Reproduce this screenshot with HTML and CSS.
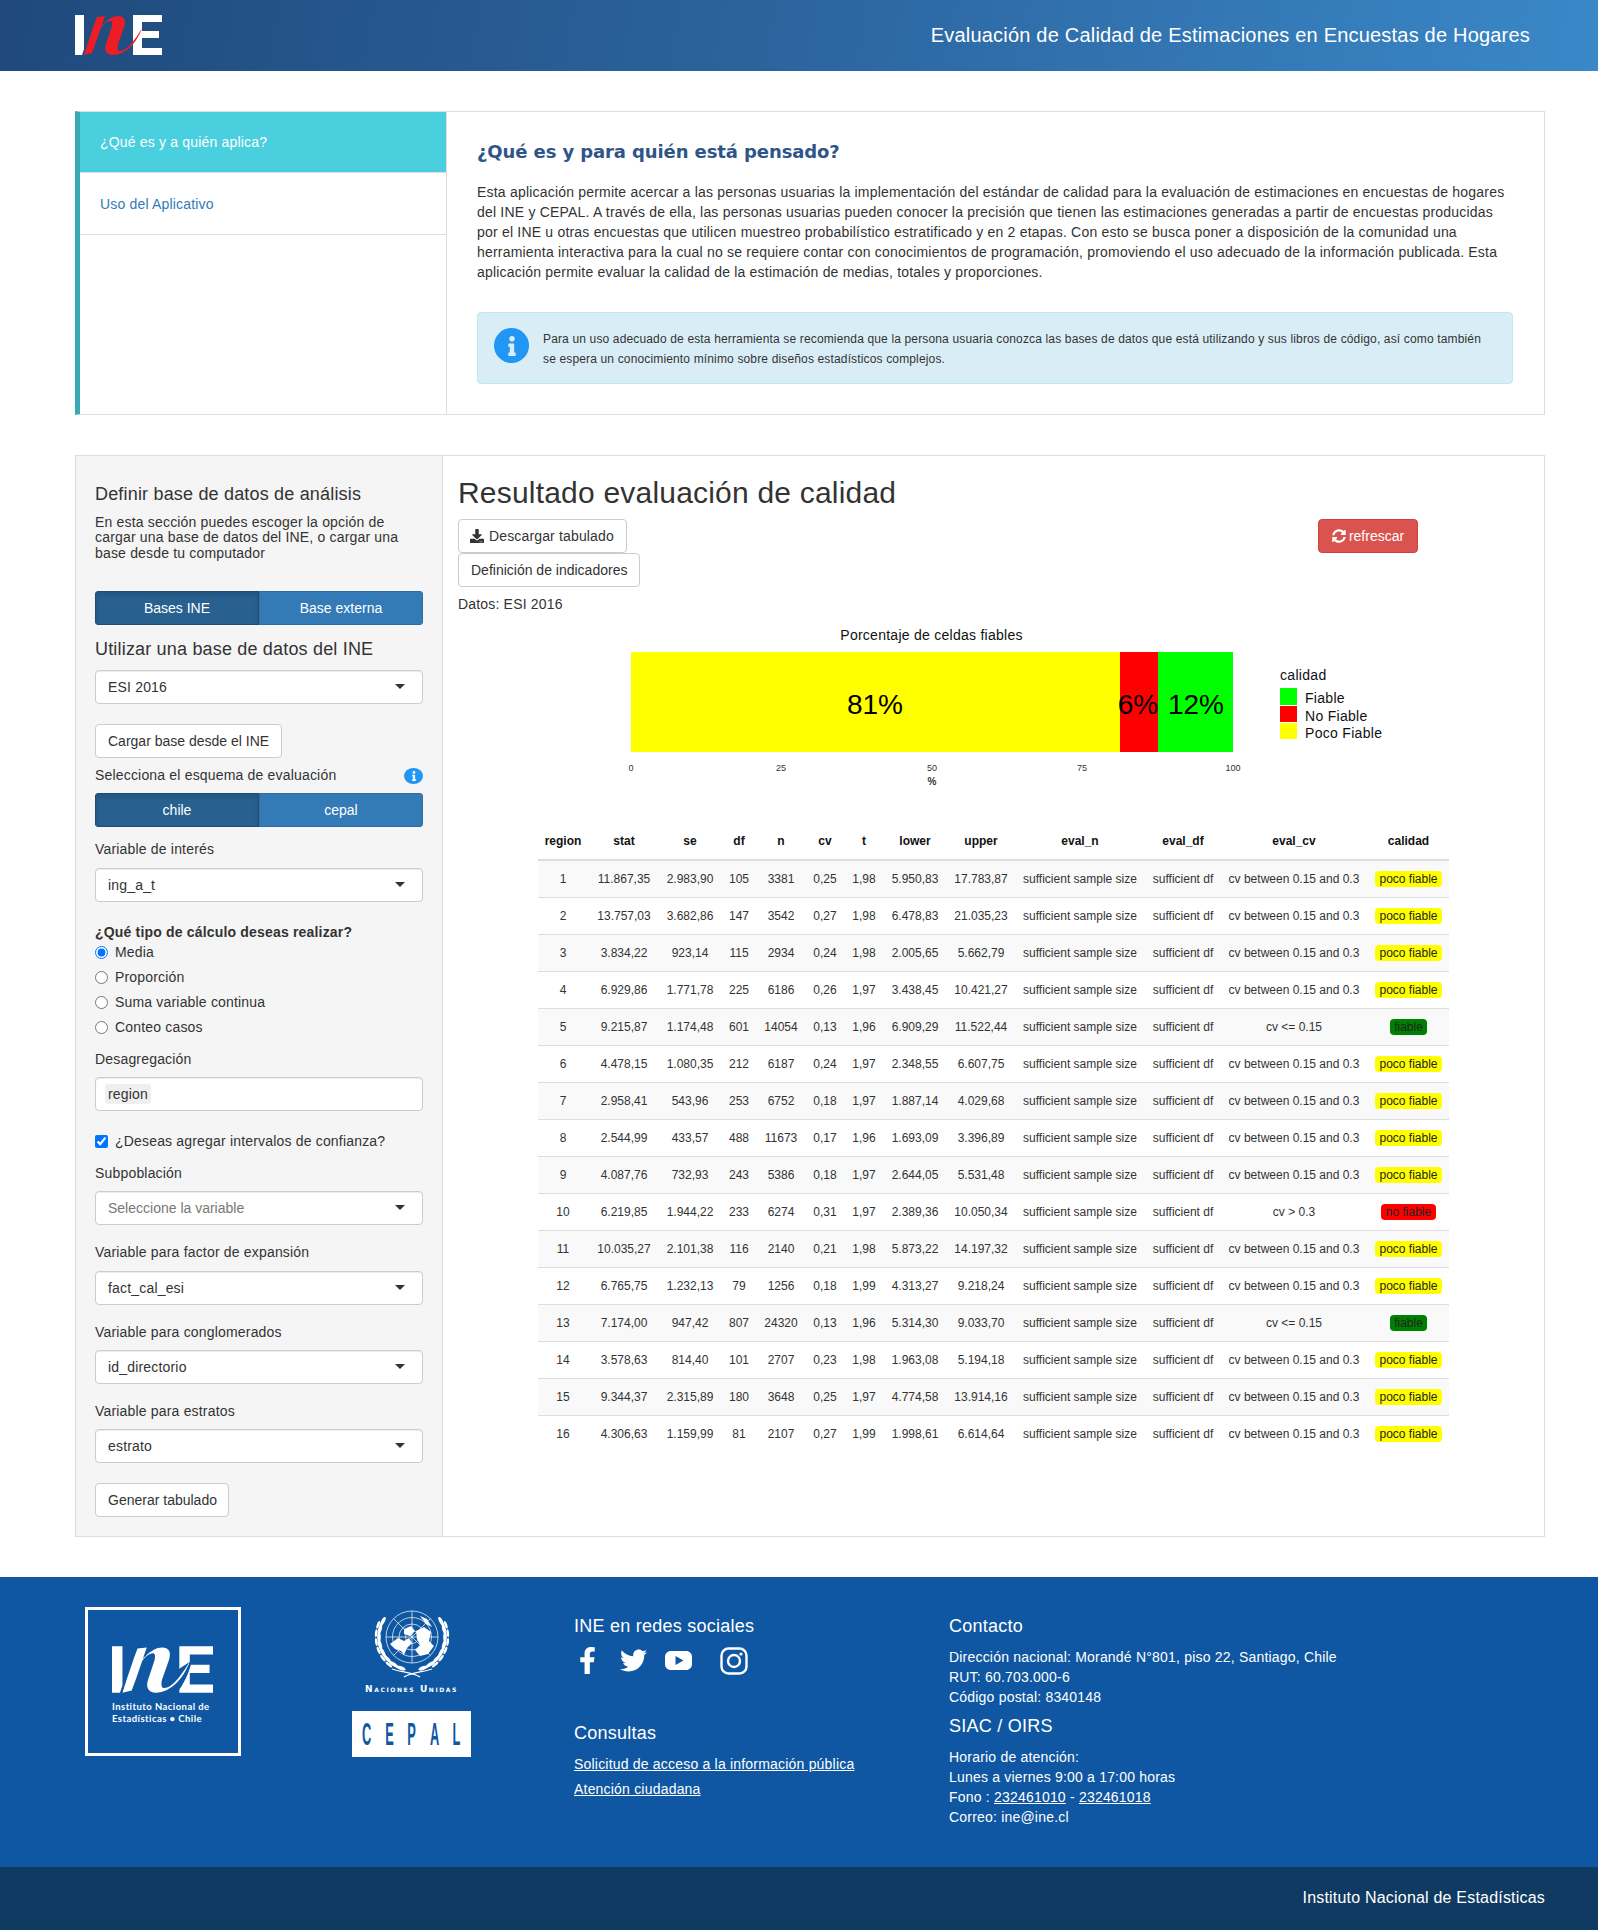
FILE: index.html
```html
<!DOCTYPE html>
<html lang="es">
<head>
<meta charset="utf-8">
<title>Evaluación de Calidad de Estimaciones en Encuestas de Hogares</title>
<link rel="stylesheet" href="styles.css">
</head>
<body>
<header class="topbar">
  <svg class="logo-top" viewBox="0 0 87 40">
    <path class="lw" d="M0 0H9V34L7 40H0Z"/>
    <path class="lw" d="M58 0H87V7H67V16H84V23H67V33H87V40H58Z"/>
    <path class="lr" d="M9 40C13 28 18 12 22 2L30 1C26 12 21 28 17 38ZM18 24C24 12 34 1 43 1 50 1 51 6 49 12L43 29C42 34 43 36 45 36 52 36 60 25 67 13 62 28 50 40 38 40 31 40 29 35 31 29L36 14C38 8 37 6 35 6 30 6 24 14 19 25Z"/>
  </svg>
  <div class="topbar-title">Evaluación de Calidad de Estimaciones en Encuestas de Hogares</div>
</header>

<section class="panel intro">
  <nav class="tabs">
    <a class="tab active">¿Qué es y a quién aplica?</a>
    <a class="tab">Uso del Aplicativo</a>
  </nav>
  <div class="intro-body">
    <h3 class="intro-title">¿Qué es y para quién está pensado?</h3>
    <p class="intro-text">Esta aplicación permite acercar a las personas usuarias la implementación del estándar de calidad para la evaluación de estimaciones en encuestas de hogares del INE y CEPAL. A través de ella, las personas usuarias pueden conocer la precisión que tienen las estimaciones generadas a partir de encuestas producidas por el INE u otras encuestas que utilicen muestreo probabilístico estratificado y en 2 etapas. Con esto se busca poner a disposición de la comunidad una herramienta interactiva para la cual no se requiere contar con conocimientos de programación, promoviendo el uso adecuado de la información publicada. Esta aplicación permite evaluar la calidad de la estimación de medias, totales y proporciones.</p>
    <div class="alert">
      <span class="info-big"><svg class="info-glyph-big" viewBox="0 0 192 512"><path d="M20 424.229h20V279.771H20c-11.046 0-20-8.954-20-20V212c0-11.046 8.954-20 20-20h112c11.046 0 20 8.954 20 20v212.229h20c11.046 0 20 8.954 20 20V492c0 11.046-8.954 20-20 20H20c-11.046 0-20-8.954-20-20v-47.771c0-11.046 8.954-20 20-20zM96 0C56.235 0 24 32.235 24 72s32.235 72 72 72 72-32.235 72-72S135.764 0 96 0z"/></svg></span>
      <p class="alert-text">Para un uso adecuado de esta herramienta se recomienda que la persona usuaria conozca las bases de datos que está utilizando y sus libros de código, así como también se espera un conocimiento mínimo sobre diseños estadísticos complejos.</p>
    </div>
  </div>
</section>

<section class="panel work">
  <aside class="side">
    <h4 class="side-h first">Definir base de datos de análisis</h4>
    <p class="side-p">En esta sección puedes escoger la opción de cargar una base de datos del INE, o cargar una base desde tu computador</p>
    <div class="seg seg-a"><span class="seg-b on">Bases INE</span><span class="seg-b">Base externa</span></div>
    <h4 class="side-h second">Utilizar una base de datos del INE</h4>
    <div class="select sel-a">ESI 2016<i class="caret"></i></div>
    <button class="btn btn-load">Cargar base desde el INE</button>
    <div class="label-row"><span>Selecciona el esquema de evaluación</span><span class="info-small"><svg class="info-glyph-small" viewBox="0 0 192 512"><path d="M20 424.229h20V279.771H20c-11.046 0-20-8.954-20-20V212c0-11.046 8.954-20 20-20h112c11.046 0 20 8.954 20 20v212.229h20c11.046 0 20 8.954 20 20V492c0 11.046-8.954 20-20 20H20c-11.046 0-20-8.954-20-20v-47.771c0-11.046 8.954-20 20-20zM96 0C56.235 0 24 32.235 24 72s32.235 72 72 72 72-32.235 72-72S135.764 0 96 0z"/></svg></span></div>
    <div class="seg seg-c"><span class="seg-b on">chile</span><span class="seg-b">cepal</span></div>
    <label class="lab lab-var">Variable de interés</label>
    <div class="select">ing_a_t<i class="caret"></i></div>
    <div class="q-title">¿Qué tipo de cálculo deseas realizar?</div>
    <div class="radios">
      <label class="opt"><input type="radio" name="t" checked>Media</label>
      <label class="opt"><input type="radio" name="t">Proporción</label>
      <label class="opt"><input type="radio" name="t">Suma variable continua</label>
      <label class="opt"><input type="radio" name="t">Conteo casos</label>
    </div>
    <label class="lab lab-des">Desagregación</label>
    <div class="select multi"><span class="chip">region</span></div>
    <label class="opt check"><input type="checkbox" checked>¿Deseas agregar intervalos de confianza?</label>
    <label class="lab lab-sub">Subpoblación</label>
    <div class="select placeholder">Seleccione la variable<i class="caret"></i></div>
    <label class="lab lab-fac">Variable para factor de expansión</label>
    <div class="select">fact_cal_esi<i class="caret"></i></div>
    <label class="lab lab-con">Variable para conglomerados</label>
    <div class="select">id_directorio<i class="caret"></i></div>
    <label class="lab lab-est">Variable para estratos</label>
    <div class="select">estrato<i class="caret"></i></div>
    <button class="btn btn-gen">Generar tabulado</button>
  </aside>

  <main class="results">
    <h2 class="res-title">Resultado evaluación de calidad</h2>
    <div class="res-actions">
      <button class="btn btn-down"><svg class="ico-down" viewBox="0 0 512 512"><path d="M216 0h80c13.3 0 24 10.7 24 24v168h87.7c17.8 0 26.7 21.5 14.1 34.1L269.7 378.3c-7.5 7.5-19.8 7.5-27.3 0L90.1 226.1c-12.6-12.6-3.7-34.1 14.1-34.1H192V24c0-13.3 10.7-24 24-24zm296 376v112c0 13.3-10.7 24-24 24H24c-13.3 0-24-10.7-24-24V376c0-13.3 10.7-24 24-24h146.7l49 49c20.1 20.1 52.5 20.1 72.6 0l49-49H488c13.3 0 24 10.7 24 24zm-124 88c0-11-9-20-20-20s-20 9-20 20 9 20 20 20 20-9 20-20zm64 0c0-11-9-20-20-20s-20 9-20 20 9 20 20 20 20-9 20-20z"/></svg>Descargar tabulado</button>
      <button class="btn btn-refresh"><svg class="ico-sync" viewBox="0 0 512 512"><path d="M370.72 133.28C339.458 104.008 298.888 87.962 255.848 88c-77.458.068-144.328 53.178-162.791 126.85-1.344 5.363-6.122 9.15-11.651 9.15H24.103c-7.498 0-13.194-6.807-11.807-14.176C33.933 94.924 134.813 8 256 8c66.448 0 126.791 26.136 171.315 68.685L463.03 40.97C478.149 25.851 504 36.559 504 57.941V192c0 13.255-10.745 24-24 24H345.941c-21.382 0-32.09-25.851-16.971-40.971l41.75-41.749zM32 296h134.059c21.382 0 32.09 25.851 16.971 40.971l-41.75 41.75c31.262 29.273 71.835 45.319 114.876 45.28 77.418-.07 144.315-53.144 162.787-126.849 1.344-5.363 6.122-9.15 11.651-9.15h57.304c7.498 0 13.194 6.807 11.807 14.176C478.067 417.076 377.187 504 256 504c-66.448 0-126.791-26.136-171.315-68.685L48.97 471.03C33.851 486.149 8 475.441 8 454.059V320c0-13.255 10.745-24 24-24z"/></svg>refrescar</button>
    </div>
    <button class="btn btn-def">Definición de indicadores</button>
    <div class="datos">Datos: ESI 2016</div>
    <svg class="chart" viewBox="0 0 1072 202">
      <text class="c-title" x="473.5" y="20">Porcentaje de celdas fiables</text>
      <rect class="f-y" x="173" y="32" width="489" height="100"/>
      <rect class="f-r" x="662" y="32" width="38" height="100"/>
      <rect class="f-g" x="700" y="32" width="75" height="100"/>
      <text class="c-pct" x="417" y="94">81%</text>
      <text class="c-pct" x="680" y="94">6%</text>
      <text class="c-pct" x="738" y="94">12%</text>
      <text class="c-tick" x="173" y="151">0</text>
      <text class="c-tick" x="323" y="151">25</text>
      <text class="c-tick" x="474" y="151">50</text>
      <text class="c-tick" x="624" y="151">75</text>
      <text class="c-tick" x="775" y="151">100</text>
      <text class="c-axis" x="474" y="165">%</text>
      <text class="c-leg" x="822" y="60">calidad</text>
      <rect class="f-g" x="822" y="68" width="17" height="17"/>
      <rect class="f-r" x="822" y="86" width="17" height="16"/>
      <rect class="f-y" x="822" y="103" width="17" height="16"/>
      <text class="c-leg" x="847" y="83">Fiable</text>
      <text class="c-leg" x="847" y="101">No Fiable</text>
      <text class="c-leg" x="847" y="118">Poco Fiable</text>
    </svg>
    <table class="data">
      <colgroup><col class="w1"><col class="w2"><col class="w3"><col class="w4"><col class="w5"><col class="w6"><col class="w7"><col class="w8"><col class="w9"><col class="w10"><col class="w11"><col class="w12"><col class="w13"></colgroup>
      <thead><tr><th>region</th><th>stat</th><th>se</th><th>df</th><th>n</th><th>cv</th><th>t</th><th>lower</th><th>upper</th><th>eval_n</th><th>eval_df</th><th>eval_cv</th><th>calidad</th></tr></thead>
      <tbody>
      <tr><td>1</td><td>11.867,35</td><td>2.983,90</td><td>105</td><td>3381</td><td>0,25</td><td>1,98</td><td>5.950,83</td><td>17.783,87</td><td>sufficient sample size</td><td>sufficient df</td><td>cv between 0.15 and 0.3</td><td><span class="pill y">poco fiable</span></td></tr>
      <tr><td>2</td><td>13.757,03</td><td>3.682,86</td><td>147</td><td>3542</td><td>0,27</td><td>1,98</td><td>6.478,83</td><td>21.035,23</td><td>sufficient sample size</td><td>sufficient df</td><td>cv between 0.15 and 0.3</td><td><span class="pill y">poco fiable</span></td></tr>
      <tr><td>3</td><td>3.834,22</td><td>923,14</td><td>115</td><td>2934</td><td>0,24</td><td>1,98</td><td>2.005,65</td><td>5.662,79</td><td>sufficient sample size</td><td>sufficient df</td><td>cv between 0.15 and 0.3</td><td><span class="pill y">poco fiable</span></td></tr>
      <tr><td>4</td><td>6.929,86</td><td>1.771,78</td><td>225</td><td>6186</td><td>0,26</td><td>1,97</td><td>3.438,45</td><td>10.421,27</td><td>sufficient sample size</td><td>sufficient df</td><td>cv between 0.15 and 0.3</td><td><span class="pill y">poco fiable</span></td></tr>
      <tr><td>5</td><td>9.215,87</td><td>1.174,48</td><td>601</td><td>14054</td><td>0,13</td><td>1,96</td><td>6.909,29</td><td>11.522,44</td><td>sufficient sample size</td><td>sufficient df</td><td>cv &lt;= 0.15</td><td><span class="pill g">fiable</span></td></tr>
      <tr><td>6</td><td>4.478,15</td><td>1.080,35</td><td>212</td><td>6187</td><td>0,24</td><td>1,97</td><td>2.348,55</td><td>6.607,75</td><td>sufficient sample size</td><td>sufficient df</td><td>cv between 0.15 and 0.3</td><td><span class="pill y">poco fiable</span></td></tr>
      <tr><td>7</td><td>2.958,41</td><td>543,96</td><td>253</td><td>6752</td><td>0,18</td><td>1,97</td><td>1.887,14</td><td>4.029,68</td><td>sufficient sample size</td><td>sufficient df</td><td>cv between 0.15 and 0.3</td><td><span class="pill y">poco fiable</span></td></tr>
      <tr><td>8</td><td>2.544,99</td><td>433,57</td><td>488</td><td>11673</td><td>0,17</td><td>1,96</td><td>1.693,09</td><td>3.396,89</td><td>sufficient sample size</td><td>sufficient df</td><td>cv between 0.15 and 0.3</td><td><span class="pill y">poco fiable</span></td></tr>
      <tr><td>9</td><td>4.087,76</td><td>732,93</td><td>243</td><td>5386</td><td>0,18</td><td>1,97</td><td>2.644,05</td><td>5.531,48</td><td>sufficient sample size</td><td>sufficient df</td><td>cv between 0.15 and 0.3</td><td><span class="pill y">poco fiable</span></td></tr>
      <tr><td>10</td><td>6.219,85</td><td>1.944,22</td><td>233</td><td>6274</td><td>0,31</td><td>1,97</td><td>2.389,36</td><td>10.050,34</td><td>sufficient sample size</td><td>sufficient df</td><td>cv &gt; 0.3</td><td><span class="pill r">no fiable</span></td></tr>
      <tr><td>11</td><td>10.035,27</td><td>2.101,38</td><td>116</td><td>2140</td><td>0,21</td><td>1,98</td><td>5.873,22</td><td>14.197,32</td><td>sufficient sample size</td><td>sufficient df</td><td>cv between 0.15 and 0.3</td><td><span class="pill y">poco fiable</span></td></tr>
      <tr><td>12</td><td>6.765,75</td><td>1.232,13</td><td>79</td><td>1256</td><td>0,18</td><td>1,99</td><td>4.313,27</td><td>9.218,24</td><td>sufficient sample size</td><td>sufficient df</td><td>cv between 0.15 and 0.3</td><td><span class="pill y">poco fiable</span></td></tr>
      <tr><td>13</td><td>7.174,00</td><td>947,42</td><td>807</td><td>24320</td><td>0,13</td><td>1,96</td><td>5.314,30</td><td>9.033,70</td><td>sufficient sample size</td><td>sufficient df</td><td>cv &lt;= 0.15</td><td><span class="pill g">fiable</span></td></tr>
      <tr><td>14</td><td>3.578,63</td><td>814,40</td><td>101</td><td>2707</td><td>0,23</td><td>1,98</td><td>1.963,08</td><td>5.194,18</td><td>sufficient sample size</td><td>sufficient df</td><td>cv between 0.15 and 0.3</td><td><span class="pill y">poco fiable</span></td></tr>
      <tr><td>15</td><td>9.344,37</td><td>2.315,89</td><td>180</td><td>3648</td><td>0,25</td><td>1,97</td><td>4.774,58</td><td>13.914,16</td><td>sufficient sample size</td><td>sufficient df</td><td>cv between 0.15 and 0.3</td><td><span class="pill y">poco fiable</span></td></tr>
      <tr><td>16</td><td>4.306,63</td><td>1.159,99</td><td>81</td><td>2107</td><td>0,27</td><td>1,99</td><td>1.998,61</td><td>6.614,64</td><td>sufficient sample size</td><td>sufficient df</td><td>cv between 0.15 and 0.3</td><td><span class="pill y">poco fiable</span></td></tr>
      </tbody>
    </table>
  </main>
</section>

<footer class="foot">
  <div class="foot-main">
    <div class="ine-box">
      <svg class="logo-foot" viewBox="0 0 87 40">
        <path class="lw" d="M0 0H9V34L7 40H0Z"/>
        <path class="lw" d="M58 0H87V7H67V16H84V23H67V33H87V40H58Z"/>
        <path class="lb" d="M7 40 20 2 32 0 19 40Z"/>
        <path class="lb" d="M56 40C62 32 66 24 69 12L54 22 48 40Z"/>
        <path class="lw" d="M9 40C13 28 18 12 22 2L30 1C26 12 21 28 17 38ZM18 24C24 12 34 1 43 1 50 1 51 6 49 12L43 29C42 34 43 36 45 36 52 36 60 25 67 13 62 28 50 40 38 40 31 40 29 35 31 29L36 14C38 8 37 6 35 6 30 6 24 14 19 25Z"/>
      </svg>
      <div class="ine-text">Instituto Nacional de<br>Estadísticas • Chile</div>
    </div>
    <div class="cepal-col">
      <svg class="un" viewBox="0 0 76 68">
        <g class="un-globe">
          <circle cx="38" cy="27" r="26"/><circle cx="38" cy="27" r="19.5"/><circle cx="38" cy="27" r="13"/><circle cx="38" cy="27" r="6.5"/>
          <path d="M12 27H64M38 1V53M19.6 8.6 56.4 45.4M56.4 8.6 19.6 45.4"/>
        </g>
        <path class="lw" d="M16 34 24 28 30 31 35 28 38 33 33 38 30 45 27 41 21 39ZM42 21 50 17 57 22 55 31 60 36 54 44 46 46 41 40 46 35 43 29ZM30 19 37 16 41 21 36 26 30 24ZM46 6 53 9 58 17 52 14Z"/>
        <g class="lw">
          <ellipse cx="5" cy="27" rx="1.8" ry="5" transform="rotate(28 38 27)"/>
          <ellipse cx="5" cy="27" rx="1.8" ry="5" transform="rotate(14 38 27)"/>
          <ellipse cx="5" cy="27" rx="1.8" ry="5"/>
          <ellipse cx="5" cy="27" rx="1.8" ry="5" transform="rotate(-14 38 27)"/>
          <ellipse cx="5" cy="27" rx="1.8" ry="5" transform="rotate(-28 38 27)"/>
          <ellipse cx="5" cy="27" rx="1.8" ry="5" transform="rotate(-42 38 27)"/>
          <ellipse cx="5" cy="27" rx="1.8" ry="5" transform="rotate(-56 38 27)"/>
          <ellipse cx="5" cy="27" rx="1.8" ry="5" transform="rotate(-70 38 27)"/>
          <ellipse cx="2" cy="27" rx="1.3" ry="4" transform="rotate(20 38 27)"/>
          <ellipse cx="2" cy="27" rx="1.3" ry="4" transform="rotate(6 38 27)"/>
          <ellipse cx="2" cy="27" rx="1.3" ry="4" transform="rotate(-8 38 27)"/>
          <ellipse cx="2" cy="27" rx="1.3" ry="4" transform="rotate(-22 38 27)"/>
          <ellipse cx="2" cy="27" rx="1.3" ry="4" transform="rotate(-36 38 27)"/>
          <ellipse cx="2" cy="27" rx="1.3" ry="4" transform="rotate(-50 38 27)"/>
          <ellipse cx="71" cy="27" rx="1.8" ry="5" transform="rotate(-28 38 27)"/>
          <ellipse cx="71" cy="27" rx="1.8" ry="5" transform="rotate(-14 38 27)"/>
          <ellipse cx="71" cy="27" rx="1.8" ry="5"/>
          <ellipse cx="71" cy="27" rx="1.8" ry="5" transform="rotate(14 38 27)"/>
          <ellipse cx="71" cy="27" rx="1.8" ry="5" transform="rotate(28 38 27)"/>
          <ellipse cx="71" cy="27" rx="1.8" ry="5" transform="rotate(42 38 27)"/>
          <ellipse cx="71" cy="27" rx="1.8" ry="5" transform="rotate(56 38 27)"/>
          <ellipse cx="71" cy="27" rx="1.8" ry="5" transform="rotate(70 38 27)"/>
          <ellipse cx="74" cy="27" rx="1.3" ry="4" transform="rotate(-20 38 27)"/>
          <ellipse cx="74" cy="27" rx="1.3" ry="4" transform="rotate(-6 38 27)"/>
          <ellipse cx="74" cy="27" rx="1.3" ry="4" transform="rotate(8 38 27)"/>
          <ellipse cx="74" cy="27" rx="1.3" ry="4" transform="rotate(22 38 27)"/>
          <ellipse cx="74" cy="27" rx="1.3" ry="4" transform="rotate(36 38 27)"/>
          <ellipse cx="74" cy="27" rx="1.3" ry="4" transform="rotate(50 38 27)"/>
        </g>
        <path class="un-stem" d="M18 59C26 62 38 62 46 67M58 59C50 62 38 62 30 67"/>
      </svg>
      <div class="un-name">Naciones Unidas</div>
      <div class="cepal-box"><span class="cl">C</span><span class="cl">E</span><span class="cl">P</span><span class="cl">A</span><span class="cl">L</span></div>
    </div>
    <div class="foot-col">
      <h4 class="foot-h">INE en redes sociales</h4>
      <div class="social">
        <svg class="s-fb" viewBox="0 0 320 512"><path d="M279.14 288l14.22-92.66h-88.91v-60.13c0-25.35 12.42-50.06 52.24-50.06h40.42V6.26S260.43 0 225.36 0c-73.22 0-121.08 44.38-121.08 124.72v70.62H22.89V288h81.39v224h100.17V288z"/></svg>
        <svg class="s-tw" viewBox="0 0 512 512"><path d="M459.37 151.716c.325 4.548.325 9.097.325 13.645 0 138.72-105.583 298.558-298.558 298.558-59.452 0-114.68-17.219-161.137-47.106 8.447.974 16.568 1.299 25.34 1.299 49.055 0 94.213-16.568 130.274-44.832-46.132-.975-84.792-31.188-98.112-72.772 6.498.974 12.995 1.624 19.818 1.624 9.421 0 18.843-1.3 27.614-3.573-48.081-9.747-84.143-51.98-84.143-102.985v-1.299c13.969 7.797 30.214 12.67 47.431 13.319-28.264-18.843-46.781-51.005-46.781-87.391 0-19.492 5.197-37.36 14.294-52.954 51.655 63.675 129.3 105.258 216.365 109.807-1.624-7.797-2.599-15.918-2.599-24.04 0-57.828 46.782-104.934 104.934-104.934 30.213 0 57.502 12.67 76.67 33.137 23.715-4.548 46.456-13.32 66.599-25.34-7.798 24.366-24.366 44.833-46.132 57.827 21.117-2.273 41.584-8.122 60.426-16.243-14.292 20.791-32.161 39.308-52.628 54.253z"/></svg>
        <svg class="s-yt" viewBox="0 0 27 27"><path fill-rule="evenodd" d="M6 4H21C24.5 4 27 6.5 27 10V17C27 20.500 24.500 23 21 23H6C2.500 23 0 20.500 0 17V10C0 6.500 2.500 4 6 4ZM10.500 9V18L18.500 13.500Z"/></svg>
        <svg class="s-ig" viewBox="0 0 28 28"><rect class="ig-l" x="1.500" y="1.500" width="25" height="25" rx="7"/><circle class="ig-l" cx="14" cy="14" r="6"/><circle cx="21" cy="7" r="1.600"/></svg>
      </div>
      <h4 class="foot-h consultas">Consultas</h4>
      <a class="foot-link">Solicitud de acceso a la información pública</a>
      <a class="foot-link">Atención ciudadana</a>
    </div>
    <div class="foot-col">
      <h4 class="foot-h">Contacto</h4>
      <p class="foot-p">Dirección nacional: Morandé N°801, piso 22, Santiago, Chile<br>RUT: 60.703.000-6<br>Código postal: 8340148</p>
      <h4 class="foot-h siac">SIAC / OIRS</h4>
      <p class="foot-p">Horario de atención:<br>Lunes a viernes 9:00 a 17:00 horas<br>Fono : <a class="tel">232461010</a> - <a class="tel">232461018</a><br>Correo: ine@ine.cl</p>
    </div>
  </div>
  <div class="foot-bottom">Instituto Nacional de Estadísticas</div>
</footer>
</body>
</html>
```

FILE: styles.css
```css
* { box-sizing: border-box; }
html, body { margin: 0; padding: 0; }
body { font-family: "Liberation Sans", Arial, sans-serif; font-size: 14px; line-height: 20px; letter-spacing: .18px; color: #333; background: #fff; width: 1598px; }
h2, h3, h4, p { margin: 0; font-weight: 400; }
svg { display: block; }

.topbar { height: 71px; padding: 0 68px 0 75px; display: flex; align-items: center; justify-content: space-between; background: linear-gradient(100deg, #1f497b 0%, #2c659f 50%, #3a88c8 100%); }
.logo-top { width: 87px; height: 40px; margin-top: -1px; }
.lw { fill: #fff; }
.lr { fill: #ee1c25; }
.lb { fill: #0f57a2; }
.topbar-title { font-size: 20px; line-height: 28px; letter-spacing: .2px; color: #fff; margin-top: -1px; }

.panel { margin: 40px 53px 0 75px; border: 1px solid #ddd; display: flex; }
.intro { height: 304px; border-left: 5px solid #3aa9b5; }
.tabs { width: 367px; border-right: 1px solid #ddd; flex: none; }
.tab { display: block; height: 62px; padding: 21px 20px 0; border-bottom: 1px solid #ddd; color: #337ab7; }
.tab.active { height: 61px; padding-top: 20px; background: #4acfdf; color: #fff; }
.intro-body { flex: 1; padding: 30px 31px 0 30px; min-width: 0; }
.intro-title { font-family: "DejaVu Sans", sans-serif; font-size: 18px; line-height: 20px; font-weight: 700; color: #2f5588; letter-spacing: -.1px; }
.intro-text { margin-top: 20px; letter-spacing: .2px; }
.alert { margin-top: 30px; height: 72px; background: #d9edf7; border: 1px solid #bce8f1; border-radius: 4px; padding: 15px 20px 0 16px; display: flex; gap: 14px; }
.info-big { width: 35px; height: 35px; border-radius: 50%; background: #2196f3; display: flex; align-items: center; justify-content: center; flex: none; }
.info-glyph-big { width: 8px; height: 20px; fill: #d9edf7; }
.alert-text { font-size: 12px; line-height: 20px; letter-spacing: .15px; margin-top: 1px; }

.work { height: 1082px; }
.side { width: 367px; flex: none; background: #f5f5f5; border-right: 1px solid #ddd; padding: 28px 19px 0; }
.side-h { font-size: 18px; line-height: 20px; }
.side-p { margin-top: 11px; line-height: 15.4px; }
.seg { display: flex; height: 34px; border-radius: 4px; overflow: hidden; letter-spacing: 0; }
.seg-a { margin-top: 30px; }
.seg-c { margin-top: 8px; }
.seg-b { width: 50%; display: flex; align-items: center; justify-content: center; color: #fff; background: #337ab7; border: 1px solid #2e6da4; }
.seg-b.on { background: #286090; border-color: #204d74; box-shadow: inset 0 3px 5px rgba(0,0,0,.125); }
.second { margin-top: 14px; }
.select { position: relative; height: 34px; margin-top: 8px; padding: 6px 12px; background: #fff; border: 1px solid #ccc; border-radius: 4px; box-shadow: inset 0 1px 1px rgba(0,0,0,.075); }
.sel-a { margin-top: 11px; }
.placeholder { color: #777; letter-spacing: 0; }
.caret { position: absolute; right: 17px; top: 13px; width: 0; height: 0; border-style: solid; border-width: 5px 5px 0; border-color: #333 transparent transparent; }
.multi { padding: 6px 8px 0 9px; }
.chip { display: inline-block; padding: 0 3px; background: #efefef; border-radius: 3px; line-height: 20px; }
.btn { display: block; height: 34px; padding: 0 12px; font: inherit; letter-spacing: 0; color: #333; background: #fff; border: 1px solid #ccc; border-radius: 4px; white-space: nowrap; }
.btn-load { margin-top: 20px; width: 187px; text-align: left; }
.label-row { margin-top: 7px; display: flex; justify-content: space-between; align-items: center; }
.info-small { width: 19px; height: 16px; margin-top: 2px; border-radius: 50%; background: #2196f3; display: flex; align-items: center; justify-content: center; }
.info-glyph-small { width: 4px; height: 10px; fill: #fff; }
.lab { display: block; }
.lab-var { margin-top: 12px; }
.lab-var + .select { margin-top: 9px; }
.q-title { margin-top: 20px; font-weight: 700; }
.radios { display: flex; flex-direction: column; gap: 5px; }
.opt { display: flex; align-items: center; gap: 7px; height: 20px; }
.opt input { margin: 0; width: 13px; height: 13px; flex: none; }
.lab-des { margin-top: 12px; }
.check { margin-top: 20px; }
.lab-sub { margin-top: 12px; }
.lab-fac { margin-top: 17px; }
.lab-fac + .select { margin-top: 9px; }
.lab-con { margin-top: 17px; }
.lab-est { margin-top: 17px; }
.btn-gen { margin-top: 20px; width: 134px; text-align: left; }

.results { flex: 1; padding: 20px 0 0 15px; min-width: 0; }
.res-title { font-size: 30px; line-height: 33px; letter-spacing: .2px; }
.res-actions { margin-top: 10px; display: flex; justify-content: space-between; padding-right: 126px; }
.btn-down { width: 169px; display: flex; align-items: center; padding: 0 11px; gap: 5px; letter-spacing: .15px; }
.ico-down { width: 14px; height: 14px; fill: #333; flex: none; }
.btn-refresh { width: 100px; display: flex; align-items: center; justify-content: center; gap: 3px; color: #fff; background: #d9534f; border-color: #d43f3a; padding: 0; }
.ico-sync { width: 14px; height: 14px; fill: #fff; flex: none; }
.btn-def { width: 182px; text-align: left; }
.datos { margin-top: 7px; }
.chart { width: 1072px; height: 202px; margin-top: 6px; }
.c-title { font-size: 14px; text-anchor: middle; fill: #111; letter-spacing: .26px; }
.f-y { fill: #ff0; }
.f-r { fill: #f00; }
.f-g { fill: #0f0; }
.c-pct { font-size: 28px; text-anchor: middle; fill: #000; letter-spacing: 0; }
.c-tick { font-size: 9px; text-anchor: middle; fill: #333; letter-spacing: 0; }
.c-axis { font-size: 10px; font-weight: 700; text-anchor: middle; fill: #333; letter-spacing: 0; }
.c-leg { font-size: 14px; fill: #111; letter-spacing: .3px; }

.data { margin-left: 80px; width: 911px; table-layout: fixed; border-collapse: collapse; font-size: 12px; letter-spacing: 0; }
.data th { height: 38px; padding: 0; text-align: center; font-weight: 700; color: #111; border-bottom: 2px solid #ddd; }
.data td { height: 37px; padding: 0; text-align: center; border-bottom: 1px solid #ddd; white-space: nowrap; }
.data tbody tr:nth-child(odd) { background: #f9f9f9; }
.data tbody tr:last-child td { border-bottom: 0; }
.w1 { width: 50px; } .w2 { width: 72px; } .w3 { width: 60px; } .w4 { width: 38px; } .w5 { width: 46px; } .w6 { width: 42px; } .w7 { width: 36px; } .w8 { width: 66px; } .w9 { width: 66px; } .w10 { width: 132px; } .w11 { width: 74px; } .w12 { width: 148px; } .w13 { width: 81px; }
.pill { display: inline-block; padding: 0 4.5px; line-height: 16px; border-radius: 4px; color: #222; }
.pill.y { background: #ff0; }
.pill.g { background: #008000; }
.pill.r { background: #f00; }

.foot { margin-top: 40px; color: #fff; letter-spacing: .2px; }
.foot-main { height: 290px; background: #0f57a2; padding: 30px 0 0 85px; display: grid; grid-template-columns: 267px 222px 375px 1fr; align-items: start; }
.ine-box { width: 156px; height: 149px; border: 3px solid #fff; padding: 36px 0 0 24px; }
.logo-foot { width: 101px; height: 47px; }
.ine-text { margin-top: 8px; font-family: Lato, sans-serif; font-weight: 700; font-size: 9.5px; line-height: 11.5px; letter-spacing: .45px; white-space: nowrap; }
.cepal-col { width: 119px; padding-top: 3px; }
.un { width: 76px; height: 68px; margin: 0 auto; }
.un-globe { fill: none; stroke: #fff; stroke-width: .7; }
.un-stem { fill: none; stroke: #fff; stroke-width: 1.200; }
.un-name { margin-top: 5px; font-family: "DejaVu Sans", sans-serif; font-size: 9px; line-height: 12px; font-weight: 700; font-variant: small-caps; letter-spacing: 1.6px; text-align: center; white-space: nowrap; }
.cepal-box { margin-top: 16px; height: 46px; padding: 0 10px; background: #fff; color: #0f57a2; display: flex; align-items: center; justify-content: space-between; letter-spacing: 0; }
.cl { display: flex; justify-content: center; width: 9px; font-size: 32px; font-weight: 700; line-height: 46px; transform: scaleX(.4); }
.foot-col { padding-top: 9px; }
.foot-h { font-size: 18px; line-height: 20px; letter-spacing: .24px; }
.social { margin-top: 11px; height: 27px; display: flex; align-items: center; padding-left: 5px; fill: #fff; }
.s-fb { width: 17px; height: 27px; }
.s-tw { width: 27px; height: 27px; margin-left: 24px; }
.s-yt { width: 27px; height: 27px; margin-left: 18px; }
.s-ig { width: 28px; height: 28px; margin-left: 28px; }
.ig-l { fill: none; stroke: #fff; stroke-width: 2.400; }
.consultas { margin-top: 49px; }
.foot-link { display: block; margin-top: 5px; color: #fff; text-decoration: underline; }
.consultas + .foot-link { margin-top: 11px; }
.foot-p { margin-top: 11px; }
.siac { margin-top: 9px; }
.tel { color: #fff; text-decoration: underline; }
.foot-bottom { height: 63px; background: #0f3a61; padding: 0 53px 2px 0; display: flex; align-items: center; justify-content: flex-end; font-size: 16px; }
```
